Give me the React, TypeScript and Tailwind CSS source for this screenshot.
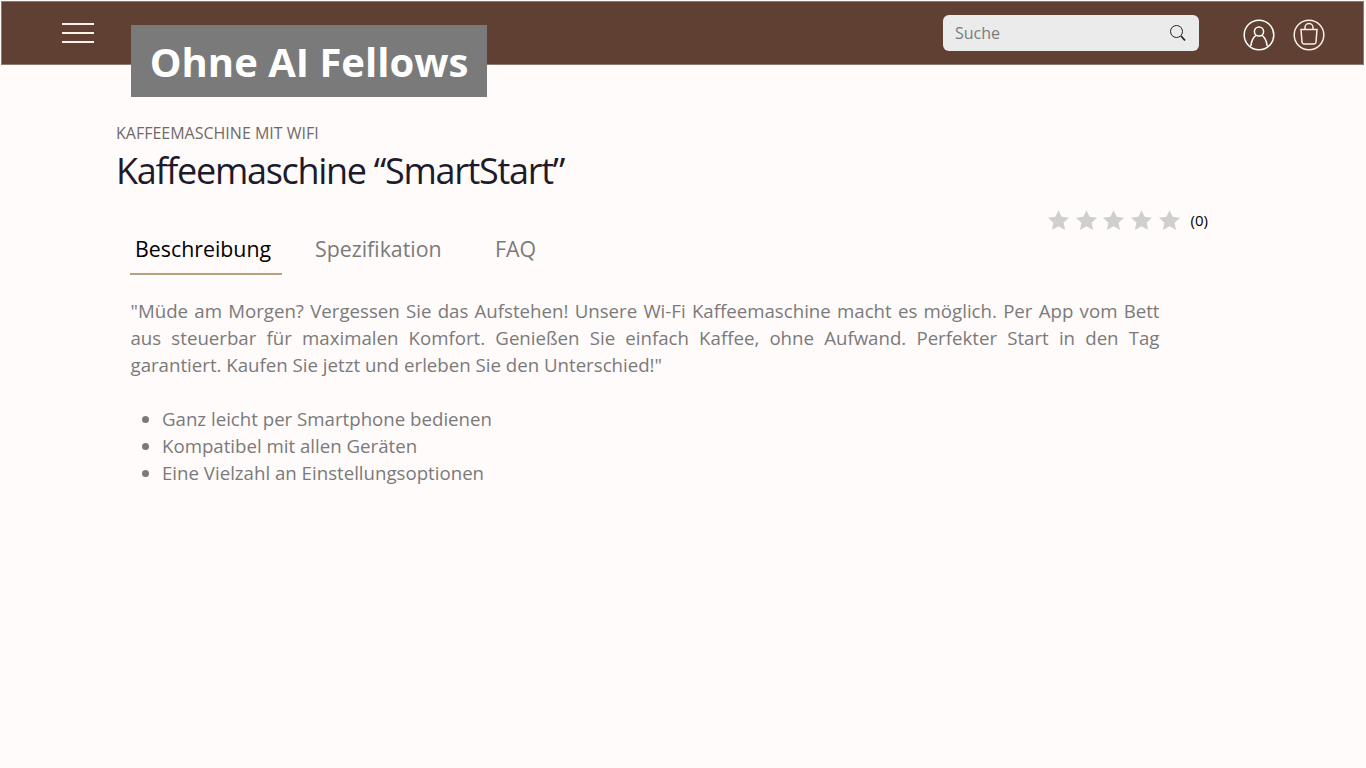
const tabs = ["Beschreibung", "Spezifikation", "FAQ"];
const bullets = [
  "Ganz leicht per Smartphone bedienen",
  "Kompatibel mit allen Geräten",
  "Eine Vielzahl an Einstellungsoptionen",
];

function Star() {
  return (
    <svg viewBox="0 0 24 24" className="w-[23px] h-[23px] fill-[#cfcfcf]">
      <path d="M12 1.2l3.3 7 7.7.9-5.7 5.2 1.6 7.6L12 18.1l-6.9 3.8 1.6-7.6L1 9.1l7.7-.9z" />
    </svg>
  );
}

export default function App() {
  return (
    <div className="relative min-h-[768px] bg-[#fffbfa] font-['Open_Sans',sans-serif] overflow-hidden">
      {/* Header */}
      <header className="ml-[1px] mr-[2px] mt-[1px] h-[64px] bg-[#604032] border border-[#8d7a6e] flex items-center pl-[60px] pr-[38px]">
        <div className="flex flex-col gap-[7.5px] w-[32px]">
          <span className="h-[1.5px] bg-[#fff3e9]" />
          <span className="h-[1.5px] bg-[#fff3e9]" />
          <span className="h-[1.5px] bg-[#fff3e9]" />
        </div>

        <div className="ml-auto w-[256px] h-[36px] bg-[#ebebeb] rounded-md flex items-center justify-between pl-3 pr-3 mt-[-1px]">
          <span className="text-[16px] text-[#7a7a7a]">Suche</span>
          <svg viewBox="0 0 18 18" className="w-[18px] h-[18px] fill-none stroke-[#222]">
            <circle cx="7.5" cy="7.5" r="6" strokeWidth="1" />
            <path d="M12 12l4 4.5" strokeWidth="1.8" />
          </svg>
        </div>

        <svg viewBox="0 0 32 32" className="ml-[44px] mt-[3px] w-[32px] h-[32px] fill-none stroke-white" strokeWidth="1.5">
          <circle cx="16" cy="16" r="14.8" />
          <circle cx="16" cy="12.5" r="4.6" />
          <path d="M7.8 27c.6-5.5 3.2-9.8 5.6-10.6M24.2 27c-.6-5.5-3.2-9.8-5.6-10.6" />
        </svg>
        <svg viewBox="0 0 32 32" className="ml-[18px] mt-[3px] w-[32px] h-[32px] fill-none stroke-[#fbeee4]" strokeWidth="1.5">
          <circle cx="16" cy="16" r="14.8" />
          <path d="M8 10.5h16l-1 12.7a2 2 0 0 1-2 1.8H11a2 2 0 0 1-2-1.8z" />
          <path d="M12 10.5V8.5a4 4 0 0 1 8 0v2" />
        </svg>
      </header>

      {/* Badge over header */}
      <div className="absolute left-[131px] top-[25px] w-[356px] h-[72px] bg-[#7a7a7a] flex items-center justify-center pt-[2px]">
        <span className="text-[40px] font-bold text-white leading-none">Ohne AI Fellows</span>
      </div>

      <main className="pl-[116px] pt-[58px]">
        <p className="text-[16px] leading-[20px] text-[#6f6a68]">KAFFEEMASCHINE MIT WIFI</p>
        <h1 className="mt-[5px] text-[36px] leading-[46px] tracking-[-1.3px] text-[#1d1a2c]">
          Kaffeemaschine “SmartStart”
        </h1>

        <div className="flex justify-end items-center pr-[158px] mt-[14px] h-[24px]">
          <div className="flex gap-[4.6px]">
            {[0, 1, 2, 3, 4].map((i) => (
              <Star key={i} />
            ))}
          </div>
          <span className="ml-[10px] text-[15px] text-black">(0)</span>
        </div>

        <div className="ml-[14px] mt-[1px]">
          <div className="flex h-[42px]">
            <div className="w-[152px] border-b-2 border-[#b9a07e] pl-[5px] pt-[1px] text-[21.33px] leading-[30px] text-black">
              {tabs[0]}
            </div>
            <div className="w-[180px] pl-[33px] pt-[1px] text-[21.33px] leading-[30px] text-[#7a7a7a]">{tabs[1]}</div>
            <div className="pl-[33px] pt-[1px] text-[21.33px] leading-[30px] text-[#7a7a7a]">{tabs[2]}</div>
          </div>

          <p className="mt-[22px] ml-[0.5px] w-[1029px] text-[18.67px] leading-[27px] text-[#7a7a7a] text-justify">
            "Müde am Morgen? Vergessen Sie das Aufstehen! Unsere Wi-Fi Kaffeemaschine macht es möglich. Per App vom Bett
            aus steuerbar für maximalen Komfort. Genießen Sie einfach Kaffee, ohne Aufwand. Perfekter Start in den Tag
            garantiert. Kaufen Sie jetzt und erleben Sie den Unterschied!"
          </p>

          <ul className="mt-[27px] pl-[32px] list-disc text-[18.67px] leading-[27px] text-[#7a7a7a]">
            {bullets.map((b) => (
              <li key={b}>{b}</li>
            ))}
          </ul>
        </div>
      </main>
    </div>
  );
}
